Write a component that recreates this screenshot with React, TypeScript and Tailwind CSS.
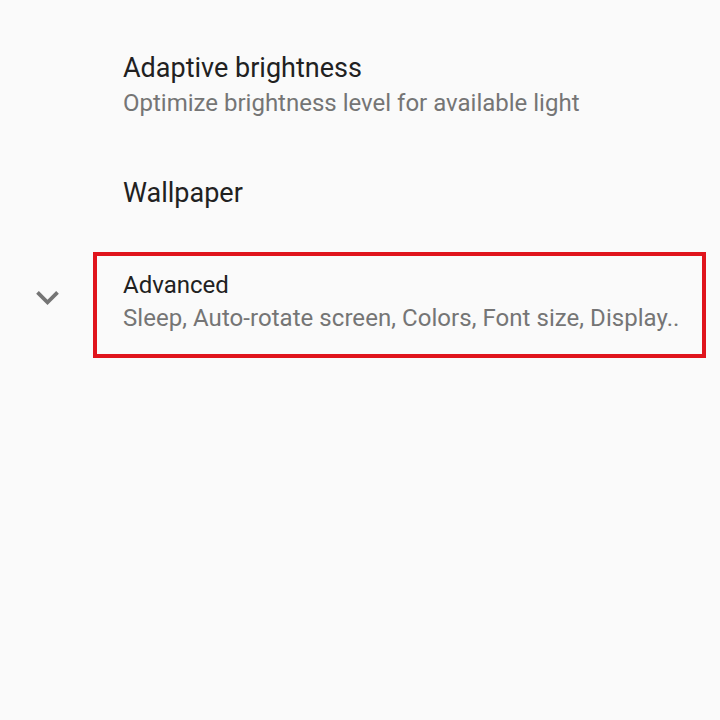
function Pref({ title, summary }: { title: string; summary?: string }) {
  return (
    <div className="pl-[123px] pr-4">
      <p className="text-[27px] leading-[34px] text-[#212121] whitespace-nowrap">{title}</p>
      {summary && <p className="text-[24px] leading-[36px] text-[#757575] whitespace-nowrap">{summary}</p>}
    </div>
  );
}

function ExpandMore() {
  return (
    <svg width="23" height="14" viewBox="6 8.59 12 7.41" className="text-[#757575]">
      <path fill="currentColor" d="M16.59 8.59L12 13.17 7.41 8.59 6 10l6 6 6-6z" />
    </svg>
  );
}

export default function App() {
  return (
    <div className="h-[720px] w-[720px] bg-[#fafafa] font-['Roboto',sans-serif] overflow-hidden">
      <div className="pt-[51px]">
        <Pref title="Adaptive brightness" summary="Optimize brightness level for available light" />
      </div>
      <div className="pt-[55px]">
        <Pref title="Wallpaper" />
      </div>
      <div className="mt-[42px] flex">
        <div className="w-[93px] pl-[36px] pt-[39px]">
          <ExpandMore />
        </div>
        <div className="w-[613px] h-[106px] border-4 border-[#e0141c] pl-[26px] pt-[13px]">
          <p className="text-[24px] leading-[32px] text-[#212121]">Advanced</p>
          <p className="text-[24px] leading-[34px] text-[#757575] whitespace-nowrap tracking-[0.05px]">
            Sleep, Auto-rotate screen, Colors, Font size, Display..
          </p>
        </div>
      </div>
    </div>
  );
}
